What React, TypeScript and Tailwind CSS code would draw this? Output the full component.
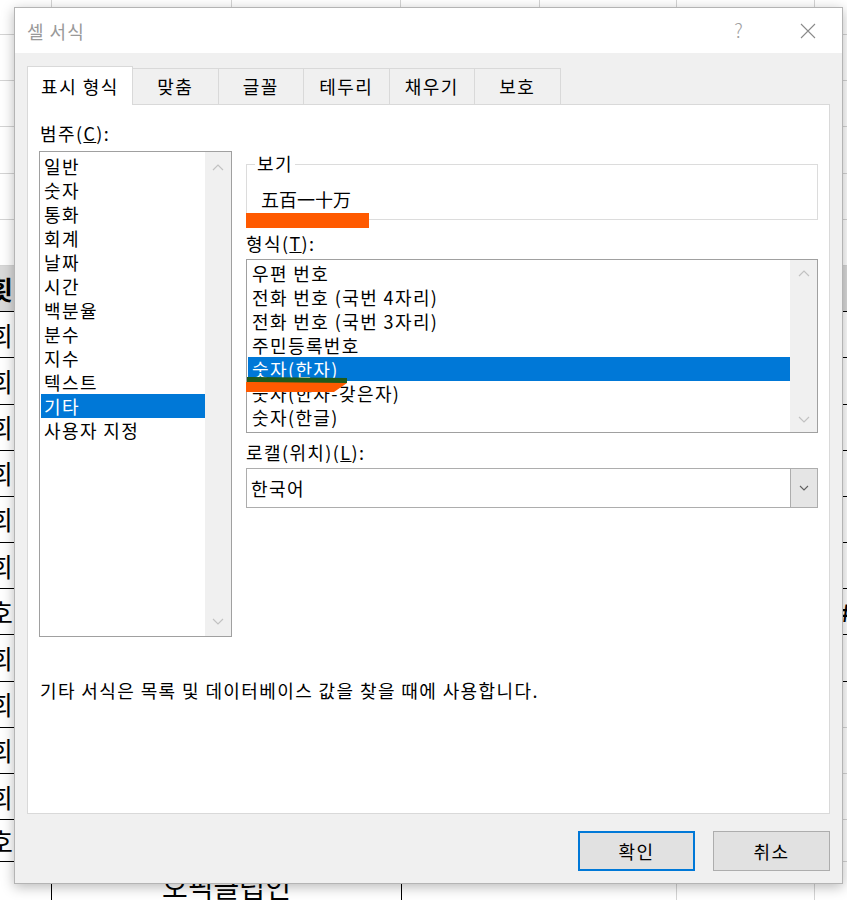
import React from 'react';

type SheetRow = {
  h: string;
  left?: string;
  leftBold?: boolean;
  dark?: boolean;
  header?: boolean;
  rightDark?: boolean;
  rightHeader?: boolean;
  rightGlyph?: string;
};

const sheetRows: SheetRow[] = [
  { h: 'h-[35px]' },
  { h: 'h-[46.2px]' },
  { h: 'h-[46.2px]' },
  { h: 'h-[46.2px]' },
  { h: 'h-[46.2px]' },
  { h: 'h-[46.2px]' },
  { h: 'h-[46.2px]', left: '횟', leftBold: true, dark: true, header: true, rightDark: true, rightHeader: true },
  { h: 'h-[46.2px]', left: '회', dark: true, rightDark: true },
  { h: 'h-[46.2px]', left: '회', dark: true, rightDark: true },
  { h: 'h-[46.2px]', left: '회', dark: true, rightDark: true },
  { h: 'h-[46.2px]', left: '회', dark: true, rightDark: true },
  { h: 'h-[46.2px]', left: '회', dark: true, rightDark: true },
  { h: 'h-[46.2px]', left: '회', dark: true, rightDark: true },
  { h: 'h-[46.2px]', left: '호', dark: true, rightDark: true, rightGlyph: '#' },
  { h: 'h-[46.2px]', left: '회', dark: true, rightDark: true },
  { h: 'h-[46.2px]', left: '회', dark: true },
  { h: 'h-[46.2px]', left: '회', dark: true },
  { h: 'h-[46.2px]', left: '회', dark: true },
  { h: 'h-[42px]', left: '호', dark: true },
];

const categories = ['일반', '숫자', '통화', '회계', '날짜', '시간', '백분율', '분수', '지수', '텍스트', '기타', '사용자 지정'];
const formats = ['우편 번호', '전화 번호 (국번 4자리)', '전화 번호 (국번 3자리)', '주민등록번호', '숫자(한자)', '숫자(한자-갖은자)', '숫자(한글)'];

const SheetLine: React.FC<{ row: SheetRow }> = ({ row }) => (
  <div className={`flex shrink-0 ${row.h}`}>
    <div
      className={`w-[52px] shrink-0 overflow-hidden flex items-center border-r border-b border-[#d4d4d4] ${row.dark ? 'border-b-black' : ''} ${row.header ? 'bg-[#d9d9d9]' : ''}`}
    >
      {row.left && (
        <span className={`-ml-[11px] text-[26px] leading-none text-black ${row.leftBold ? 'font-bold' : ''}`}>{row.left}</span>
      )}
    </div>
    <div className="w-[180px] shrink-0 border-r border-b border-[#d4d4d4]" />
    <div className="w-[169px] shrink-0 border-r border-b border-[#d4d4d4]" />
    <div className="w-[139px] shrink-0 border-r border-b border-[#d4d4d4]" />
    <div className="w-[137px] shrink-0 border-r border-b border-[#d4d4d4]" />
    <div className="w-[138px] shrink-0 border-r border-b border-[#d4d4d4]" />
    <div
      className={`flex-1 overflow-hidden flex items-center border-b border-[#d4d4d4] ${row.rightDark ? 'border-b-black' : ''} ${row.rightHeader ? 'bg-[#d9d9d9]' : ''}`}
    >
      {row.rightGlyph && <span className="ml-[26px] text-[24px] font-bold leading-none text-black">{row.rightGlyph}</span>}
    </div>
  </div>
);

const Chevron: React.FC<{ up?: boolean; color?: string }> = ({ up, color = '#c2c2c2' }) => (
  <svg width="12" height="7" viewBox="0 0 12 7">
    <polyline
      points={up ? '1,6 6,1 11,6' : '1,1 6,6 11,1'}
      fill="none"
      stroke={color}
      strokeWidth="1.2"
    />
  </svg>
);

const Track: React.FC<{ w: string; btn: string }> = ({ w, btn }) => (
  <div className={`${w} shrink-0 bg-[#f0f0f0] flex flex-col justify-between`}>
    <div className={`${btn} flex items-center justify-center`}>
      <Chevron up />
    </div>
    <div className={`${btn} flex items-center justify-center`}>
      <Chevron />
    </div>
  </div>
);

export default function App() {
  return (
    <div className="relative w-[847px] h-[900px] overflow-hidden bg-white text-black font-['Noto_Sans_CJK_KR','Noto_Sans',sans-serif]">
      {/* spreadsheet behind the dialog */}
      <div className="flex flex-col">
        {sheetRows.map((r, i) => (
          <SheetLine key={i} row={r} />
        ))}
        <div className="flex h-[48px] shrink-0">
          <div className="w-[52px] shrink-0 border-r border-black" />
          <div className="w-[350px] shrink-0 border-r border-black flex items-center justify-center text-[28px] leading-none">
            오픽클럽인
          </div>
          <div className="w-[275px] shrink-0 border-r border-[#d4d4d4]" />
          <div className="w-[138px] shrink-0 border-r border-[#d4d4d4]" />
          <div className="flex-1" />
        </div>
      </div>

      {/* dialog */}
      <div className="absolute left-[14px] top-[7px] w-[829px] h-[877px] bg-[#f0f0f0] border border-[#b4b4b4] shadow-[0_3px_12px_rgba(0,0,0,0.28)] flex flex-col">
        <div className="h-[45px] shrink-0 bg-white flex items-center">
          <span className="pl-[12px] text-[18px] tracking-[1px] leading-none text-[#999]">셀 서식</span>
          <div className="ml-auto flex h-full">
            <div className="w-[69px] flex items-center justify-center text-[19px] font-light text-[#a0a0a0]">?</div>
            <div className="w-[69px] flex items-center justify-center">
              <svg width="16" height="16" viewBox="0 0 16 16">
                <path d="M1 1 L15 15 M15 1 L1 15" stroke="#8a8a8a" strokeWidth="1.1" fill="none" />
              </svg>
            </div>
          </div>
        </div>

        <div className="flex-1 px-[12px] flex flex-col">
          {/* tabs */}
          <div className="mt-[13px] flex items-end relative z-10 -mb-px text-[18px] tracking-[1.5px]">
            <div className="w-[106px] h-[39px] bg-white border border-b-0 border-[#d9d9d9] flex items-center justify-center">
              표시 형식
            </div>
            {['맞춤', '글꼴', '테두리', '채우기', '보호'].map((t) => (
              <div
                key={t}
                className="w-[85.5px] h-[37px] bg-[#f0f0f0] border border-l-0 border-[#d9d9d9] flex items-center justify-center"
              >
                {t}
              </div>
            ))}
          </div>

          {/* panel */}
          <div className="h-[710px] shrink-0 bg-white border border-[#d9d9d9] flex flex-col pl-[11px] text-[18px] tracking-[1.4px]">
            <div className="flex pt-[16px]">
              <div className="w-[193px] shrink-0 flex flex-col">
                <div className="h-[24px] leading-[24px] pl-[1px]">
                  범주(<span className="underline">C</span>):
                </div>
                <div className="mt-[6px] h-[486px] border border-[#a0a0a0] flex">
                  <div className="flex-1 pt-[2px] pl-[1px] flex flex-col">
                    {categories.map((c) => (
                      <div
                        key={c}
                        className={`h-[24px] leading-[24px] pl-[3px] whitespace-nowrap ${c === '기타' ? 'bg-[#0078d7] text-white' : ''}`}
                      >
                        {c}
                      </div>
                    ))}
                  </div>
                  <Track w="w-[26px]" btn="h-[30px]" />
                </div>
              </div>

              <div className="ml-[14px] w-[572px] shrink-0 flex flex-col">
                <div className="mt-[43px] h-[56px] border border-[#dcdcdc] relative">
                  <span className="absolute left-[8px] -top-[14px] bg-white px-[2px] leading-[24px]">보기</span>
                  <div className="pt-[22px] pl-[14px] leading-[24px] tracking-normal">五百一十万</div>
                </div>
                <div className="mt-[11px] h-[24px] leading-[24px]">
                  형식(<span className="underline">T</span>):
                </div>
                <div className="mt-[4px] h-[174px] border border-[#a0a0a0] flex">
                  <div className="flex-1 pt-[1px] pl-[1px] flex flex-col">
                    {formats.map((f, i) => (
                      <div
                        key={f}
                        className={`h-[24px] leading-[24px] pl-[4px] whitespace-nowrap ${i === 4 ? 'bg-[#0078d7] text-white' : ''}`}
                      >
                        {f}
                      </div>
                    ))}
                  </div>
                  <Track w="w-[27px]" btn="h-[26px]" />
                </div>
                <div className="mt-[7px] h-[24px] leading-[24px]">
                  로캘(위치)(<span className="underline">L</span>):
                </div>
                <div className="mt-[4px] h-[40px] border border-[#adadad] flex">
                  <div className="flex-1 pl-[4px] flex items-center">한국어</div>
                  <div className="w-[27px] bg-[#e5e5e5] border-l border-[#adadad] flex items-center justify-center">
                    <svg width="10" height="6" viewBox="0 0 10 6">
                      <polyline points="1,1 5,5 9,1" fill="none" stroke="#606060" strokeWidth="1.1" />
                    </svg>
                  </div>
                </div>
              </div>
            </div>

            <div className="mt-[41px] leading-[24px] pl-[1px] whitespace-nowrap">
              기타 서식은 목록 및 데이터베이스 값을 찾을 때에 사용합니다.
            </div>
          </div>

          {/* buttons */}
          <div className="mt-[17px] flex justify-end gap-[18px] text-[18px] tracking-[1.4px]">
            <button className="w-[117px] h-[40px] bg-[#e1e1e1] border-2 border-[#0078d7] flex items-center justify-center">
              확인
            </button>
            <button className="w-[117px] h-[40px] bg-[#e1e1e1] border border-[#adadad] flex items-center justify-center">
              취소
            </button>
          </div>
        </div>
      </div>

      {/* highlight marks drawn over the screenshot */}
      <div className="absolute left-[246px] top-[213px] w-[123px] h-[15px] bg-[#ff5a00]" />
      <svg className="absolute left-[246px] top-[375px]" width="104" height="18" viewBox="0 0 104 18">
        <polygon points="1,2 101,3 101,8 1,8" fill="#1f5a1c" />
        <polygon points="0,7 101,8 88,17 0,17" fill="#ff5a00" />
      </svg>
    </div>
  );
}
